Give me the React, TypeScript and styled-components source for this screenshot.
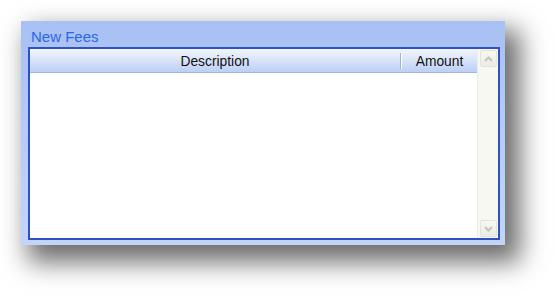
import React from "react";
import styled, { createGlobalStyle } from "styled-components";

const GlobalStyle = createGlobalStyle`
  html, body {
    margin: 0;
    padding: 0;
    background: #ffffff;
  }
  body {
    font-family: "Liberation Sans", Arial, sans-serif;
  }
`;

const Page = styled.div`
  width: 560px;
  height: 299px;
  padding: 21px 0 0 21px;
  box-sizing: border-box;
`;

const Panel = styled.div`
  width: 484px;
  height: 224px;
  box-sizing: border-box;
  display: flex;
  flex-direction: column;
  padding: 0 5px 5px 7px;
  background: linear-gradient(to bottom, #a8c0f3 0%, #b6cbf7 50%, #c2d5f9 100%);
  box-shadow: 11px 13px 24px 4px rgba(0, 0, 0, 0.58);
`;

const Title = styled.div`
  height: 26px;
  display: flex;
  align-items: center;
  padding-left: 3px;
  padding-top: 5px;
  box-sizing: border-box;
  font-size: 15px;
  color: #2a66ea;
`;

const Grid = styled.div`
  flex: 1;
  display: flex;
  border: 2px solid #2e52c2;
  background: #ffffff;
  min-height: 0;
`;

const Body = styled.div`
  flex: 1;
  display: flex;
  flex-direction: column;
`;

const HeaderRow = styled.div`
  height: 23px;
  display: flex;
  background: linear-gradient(to bottom, #f1f5fe 0%, #dbe5fb 45%, #bccff5 100%);
  border-bottom: 1px solid #9fb5e6;
`;

const HeaderCell = styled.div<{ $width?: number }>`
  ${(p) => (p.$width ? `width: ${p.$width}px;` : "flex: 1;")}
  display: flex;
  align-items: center;
  justify-content: center;
  padding-top: 2px;
  box-sizing: border-box;
  font-size: 13.8px;
  color: #111111;
`;

const Divider = styled.div`
  width: 2px;
  margin: 4px 0 3px;
  background: linear-gradient(to right, #9db0d8 50%, #ffffff 50%);
`;

const Rows = styled.div`
  flex: 1;
`;

const ScrollBar = styled.div`
  width: 20px;
  display: flex;
  flex-direction: column;
  justify-content: space-between;
  align-items: center;
  padding: 1px 0;
  background: #f8f8f3;
  border-left: 1px solid #eeeee8;
`;

const ScrollButton = styled.div`
  width: 17px;
  height: 17px;
  box-sizing: border-box;
  border: 1px solid #e3e3dc;
  border-radius: 2px;
  background: linear-gradient(to bottom, #f7f7f3, #ecece6);
  display: flex;
  align-items: center;
  justify-content: center;
`;

const Chevron = ({ down }: { down?: boolean }) => (
  <svg width="9" height="6" viewBox="0 0 9 6">
    <path
      d={down ? "M1 1 L4.5 4.5 L8 1" : "M1 5 L4.5 1.5 L8 5"}
      fill="none"
      stroke="#c4c4be"
      strokeWidth="2"
    />
  </svg>
);

export default function App() {
  return (
    <Page>
      <GlobalStyle />
      <Panel>
        <Title>New Fees</Title>
        <Grid>
          <Body>
            <HeaderRow>
              <HeaderCell>Description</HeaderCell>
              <Divider />
              <HeaderCell $width={75}>Amount</HeaderCell>
            </HeaderRow>
            <Rows />
          </Body>
          <ScrollBar>
            <ScrollButton>
              <Chevron />
            </ScrollButton>
            <ScrollButton>
              <Chevron down />
            </ScrollButton>
          </ScrollBar>
        </Grid>
      </Panel>
    </Page>
  );
}
